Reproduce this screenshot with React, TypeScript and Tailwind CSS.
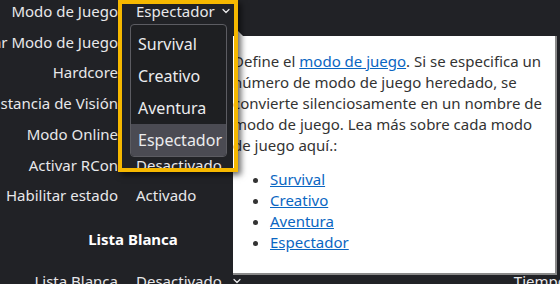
import { ChevronDown } from "lucide-react";

const font = { fontFamily: '"Noto Sans", "Open Sans", sans-serif' };

const rows = [
  { label: "Modo de Juego", value: "Espectador", chevron: "ml-[5px]" },
  { label: "Forzar Modo de Juego", value: "" },
  { label: "Hardcore", value: "" },
  { label: "Distancia de Visión", value: "" },
  { label: "Modo Online", value: "" },
  { label: "Activar RCon", value: "Desactivado" },
  { label: "Habilitar estado", value: "Activado" },
];

const modes = ["Survival", "Creativo", "Aventura", "Espectador"];

function Row({ label, value, chevron }: { label: string; value: string; chevron?: string }) {
  return (
    <div className="flex h-[30.7px] items-center">
      <div className="flex w-[118px] shrink-0 justify-end whitespace-nowrap">{label}</div>
      <div className="ml-[18px] flex items-center whitespace-nowrap">
        {value}
        {chevron && <ChevronDown className={`${chevron} h-3 w-3`} strokeWidth={2.5} />}
      </div>
    </div>
  );
}

export default function App() {
  return (
    <div
      className="relative h-[284px] w-[560px] overflow-hidden bg-[#212226] text-[15px] text-[#e8e8ea]"
      style={font}
    >
      {/* settings form */}
      <div className="flex flex-col">
        <div className="-mt-[4px]">
          {rows.map((r) => (
            <Row key={r.label} label={r.label} value={r.value} chevron={r.chevron} />
          ))}
        </div>
        <div className="flex h-[50px] w-[266px] items-center justify-center pt-[6px] font-bold text-white">
          Lista Blanca
        </div>
        <div className="mt-[5px] flex items-start">
          <div className="w-[250px]">
            <Row label="Lista Blanca" value="Desactivado" chevron="ml-[9px]" />
          </div>
          <div className="ml-[271px] flex h-[30.7px] items-center whitespace-nowrap">Tiempo</div>
        </div>
      </div>

      {/* tooltip */}
      <div className="absolute left-[233px] top-[36px] h-[239px] w-[324px] border-r-2 border-b-2 border-[#8a8a8a] bg-white pr-3 pt-[15px] text-[15px] leading-[21px] text-[#333]">
        <div className="absolute -top-[6px] left-[4px] h-0 w-0 border-r-[6px] border-b-[6px] border-r-transparent border-b-white" />
        <p>
          Define el{" "}
          <a className="text-[#0a66c2] underline">modo de juego</a>. Si se especifica un número de modo de
          juego heredado, se convierte silenciosamente en un nombre de modo de juego. Lea más sobre cada
          modo de juego aquí.:
        </p>
        <ul className="mt-[13px] list-disc pl-[37px]">
          {modes.map((m) => (
            <li key={m}>
              <a className="text-[#0a66c2] underline">{m}</a>
            </li>
          ))}
        </ul>
      </div>

      {/* focus outline around the open select */}
      <div className="absolute left-[118px] top-0 h-[172px] w-[120px] border-4 border-[#f6b800] shadow-[3px_3px_6px_rgba(0,0,0,0.6)]">
        <div className="ml-[8px] mt-[20px] w-[97px] rounded-[4px] border border-[#5c5c62] bg-[#1e1f22] pt-[3px] text-[16px] text-[#ececee]">
          {modes.map((m) => (
            <div
              key={m}
              className={`flex h-[32px] items-center pl-[7px] ${m === "Espectador" ? "rounded-b-[3px] bg-[#4b4b53]" : ""}`}
            >
              {m}
            </div>
          ))}
        </div>
      </div>
    </div>
  );
}
